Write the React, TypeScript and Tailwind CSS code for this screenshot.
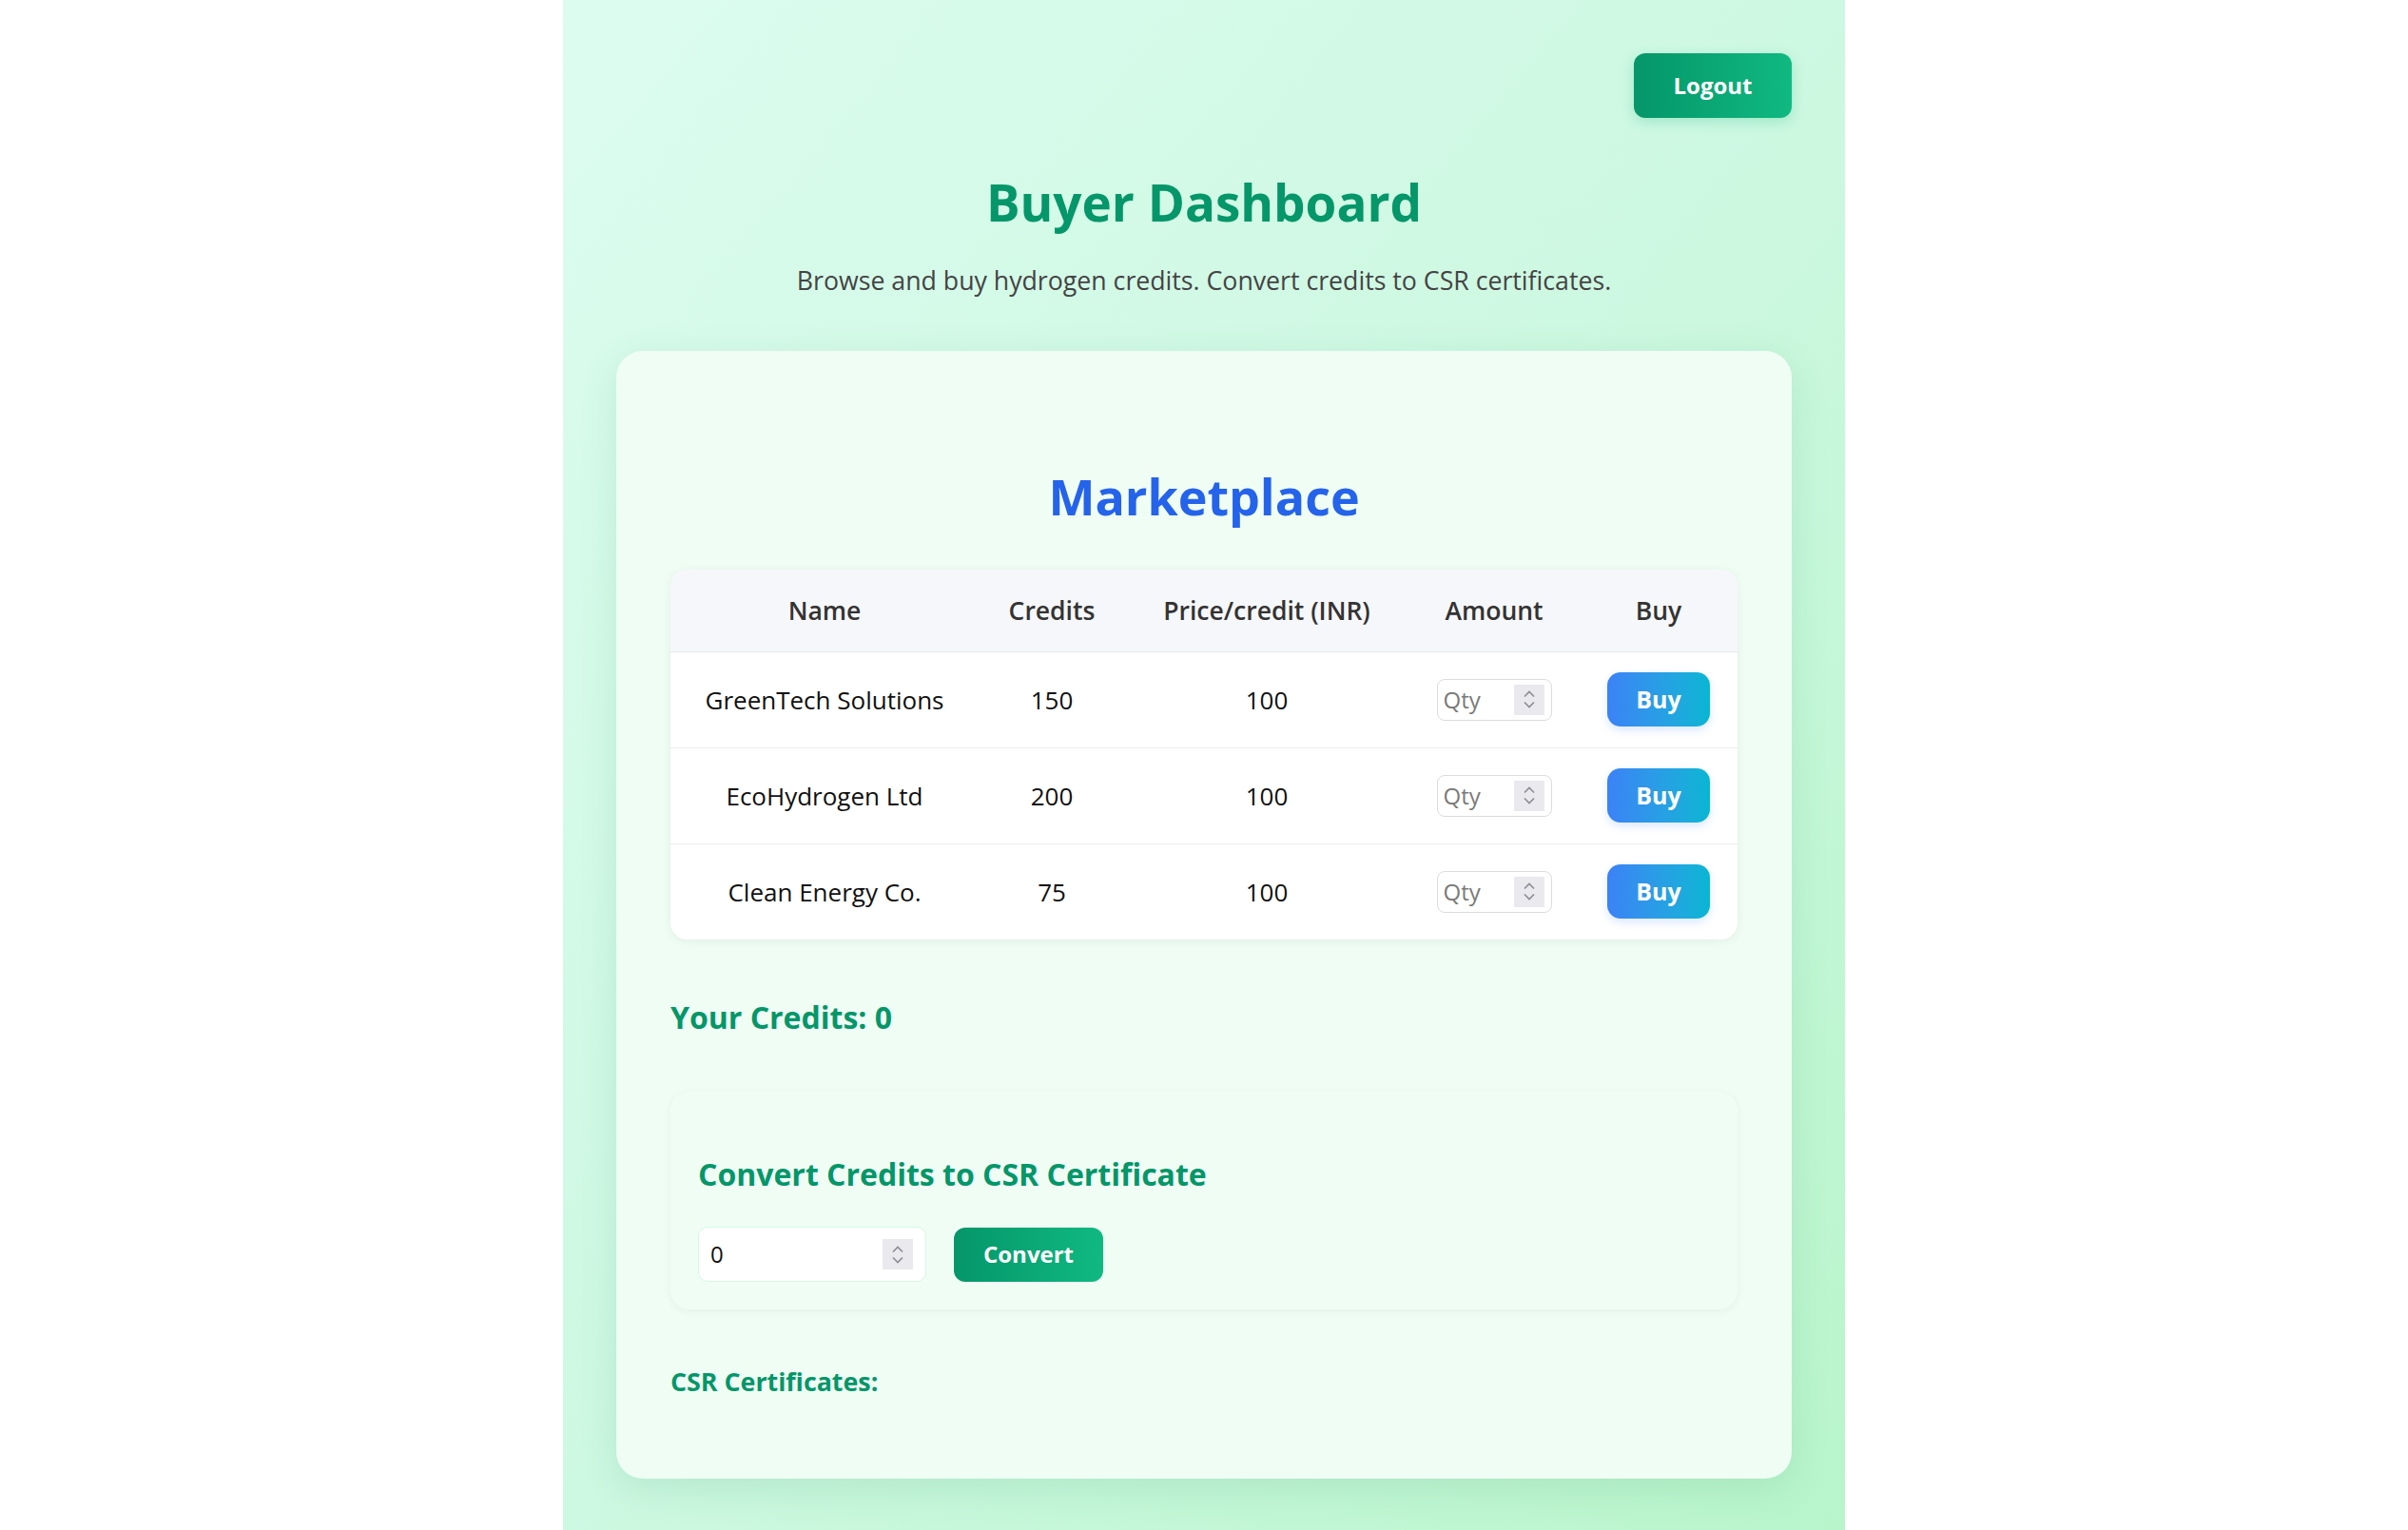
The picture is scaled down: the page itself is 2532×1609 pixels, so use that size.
import { useState } from "react";

type Listing = {
  id: string;
  name: string;
  credits: number;
  price: number;
};

const LISTINGS: Listing[] = [
  { id: "1", name: "GreenTech Solutions", credits: 150, price: 100 },
  { id: "2", name: "EcoHydrogen Ltd", credits: 200, price: 100 },
  { id: "3", name: "Clean Energy Co.", credits: 75, price: 100 },
];

const FONT = { fontFamily: '"Open Sans", "Noto Sans", sans-serif' };

function Spinner({ className = "" }: { className?: string }) {
  return (
    <span
      className={`flex h-[32px] w-[32px] flex-col items-center justify-center gap-[3px] bg-[#e9e9ee] ${className}`}
    >
      <svg width="14" height="9" viewBox="0 0 14 9" fill="none">
        <path d="M2 7.5 7 2.5l5 5" stroke="#8c8c94" strokeWidth="1.6" />
      </svg>
      <svg width="14" height="9" viewBox="0 0 14 9" fill="none">
        <path d="M2 1.5 7 6.5l5-5" stroke="#8c8c94" strokeWidth="1.6" />
      </svg>
    </span>
  );
}

function QtyInput() {
  const [value, setValue] = useState("");
  return (
    <div className="mx-auto flex h-[44px] w-[121px] items-center rounded-[8px] border border-[#dcdcdc] bg-white pl-[6px] pr-[7px]">
      <input
        value={value}
        onChange={(e) => setValue(e.target.value)}
        placeholder="Qty"
        className="w-full min-w-0 bg-transparent text-[24px] text-[#111] outline-none placeholder:text-[#7a7a7a]"
        style={FONT}
      />
      <Spinner className="shrink-0" />
    </div>
  );
}

export default function App() {
  const [credits] = useState(0);
  const [convertAmount, setConvertAmount] = useState("0");

  return (
    <div className="min-h-screen bg-white" style={FONT}>
      <div className="mx-auto min-h-screen w-[1348px] bg-gradient-to-br from-[#dcfcf0] via-[#cdf8e1] to-[#b8f5cb] px-[56px] pb-[56px] pt-[56px]">
        <div className="flex justify-end">
          <button className="h-[68px] w-[166px] rounded-[12px] bg-gradient-to-r from-[#059669] to-[#10b981] text-[24px] font-bold text-white shadow-[0_4px_14px_rgba(16,185,129,0.25)]">
            Logout
          </button>
        </div>

        <h1 className="mt-[55px] text-center text-[53px] font-bold leading-[68px] text-[#059669]">
          Buyer Dashboard
        </h1>
        <p className="mt-[30px] text-center text-[26.7px] leading-[36px] text-[#444444]">
          Browse and buy hydrogen credits. Convert credits to CSR certificates.
        </p>

        <div className="mt-[56px] rounded-[28px] bg-[#effdf4] px-[57px] pb-[84px] pt-[57px] shadow-[0_10px_40px_rgba(16,120,70,0.12)]">
          <h2 className="mt-[63px] text-center text-[52px] font-bold leading-[66px] text-[#2563eb]">
            Marketplace
          </h2>

          <div className="mt-[44px] overflow-hidden rounded-[18px] bg-white shadow-[0_2px_12px_rgba(0,0,0,0.06)]">
            <table className="w-full table-fixed border-collapse">
              <colgroup>
                <col className="w-[324px]" />
                <col className="w-[154px]" />
                <col className="w-[298px]" />
                <col className="w-[180px]" />
                <col className="w-[166px]" />
              </colgroup>
              <thead>
                <tr className="h-[86px] border-b border-[#e6e8ec] bg-[#f6f7fa] text-[26.5px] text-[#333333]">
                  <th className="pt-[3px] font-semibold">Name</th>
                  <th className="pt-[3px] font-semibold">Credits</th>
                  <th className="pt-[3px] font-semibold">Price/credit (INR)</th>
                  <th className="pt-[3px] font-semibold">Amount</th>
                  <th className="pt-[3px] font-semibold">Buy</th>
                </tr>
              </thead>
              <tbody>
                {LISTINGS.map((listing, index) => (
                  <tr
                    key={listing.id}
                    className={`h-[101px] text-center text-[26px] text-[#111111] ${
                      index < LISTINGS.length - 1 ? "border-b border-[#ececec]" : ""
                    }`}
                  >
                    <td className="pt-[2px]">{listing.name}</td>
                    <td className="pt-[2px]">{listing.credits}</td>
                    <td className="pt-[2px]">{listing.price}</td>
                    <td>
                      <QtyInput />
                    </td>
                    <td>
                      <button className="h-[57px] w-[108px] rounded-[14px] bg-gradient-to-r from-[#3b82f6] to-[#06b6d4] text-[25px] font-bold text-white shadow-[0_4px_10px_rgba(59,130,246,0.18)]">
                        Buy
                      </button>
                    </td>
                  </tr>
                ))}
              </tbody>
            </table>
          </div>

          <h3 className="mt-[60px] text-[32px] font-bold leading-[44px] text-[#059669]">
            Your Credits: {credits}
          </h3>

          <div className="mt-[56px] rounded-[20px] bg-[#f0fdf5] px-[29px] pb-[29px] pt-[67px] shadow-[0_2px_10px_rgba(0,0,0,0.05)]">
            <h3 className="text-[32px] font-bold leading-[40px] text-[#059669]">
              Convert Credits to CSR Certificate
            </h3>
            <div className="mt-[35px] flex items-center gap-[29px]">
              <div className="flex h-[58px] w-[240px] items-center rounded-[10px] border border-[#d1fae5] bg-white pl-[12px] pr-[13px]">
                <input
                  value={convertAmount}
                  onChange={(e) => setConvertAmount(e.target.value)}
                  className="w-full min-w-0 bg-transparent text-[24px] text-[#111] outline-none"
                  style={FONT}
                />
                <Spinner className="shrink-0" />
              </div>
              <button className="h-[57px] w-[157px] rounded-[12px] bg-gradient-to-r from-[#059669] to-[#10b981] text-[24px] font-bold text-white">
                Convert
              </button>
            </div>
          </div>

          <h4 className="mt-[58px] text-[26.8px] font-bold leading-[36px] text-[#059669]">
            CSR Certificates:
          </h4>
        </div>
      </div>
    </div>
  );
}
